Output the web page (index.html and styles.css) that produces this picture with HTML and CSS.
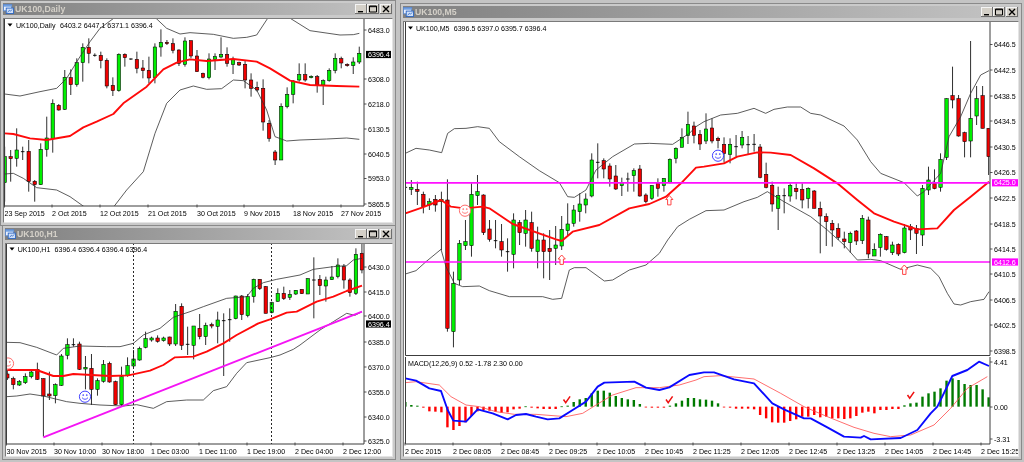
FILE: index.html
```html
<!DOCTYPE html>
<html lang="en">
<head>
<meta charset="utf-8">
<title>UK100 charts</title>
<link rel="stylesheet" href="styles.css">
</head>
<body>
<svg class="defs" width="0" height="0" aria-hidden="true">
  <symbol id="chart-icon" viewBox="0 0 12 11">
    <rect x="0.5" y="0.5" width="9" height="7" fill="#e8f0ff" stroke="#5a86c8"/>
    <rect x="1" y="1" width="8" height="2" fill="#6f9fe0"/>
    <rect x="3.5" y="4.5" width="8" height="6" fill="#cfe0fa" stroke="#2f68c0"/>
    <path d="M5 9 7 7 8 8 10 6" fill="none" stroke="#2f68c0"/>
  </symbol>
  <symbol id="btn-min" viewBox="0 0 12 10"><rect x="3" y="7" width="5" height="1.4" fill="#000"/></symbol>
  <symbol id="btn-max" viewBox="0 0 12 10"><path d="M2.5 2h7v6h-7z M2.5 2.7h7" fill="none" stroke="#000" stroke-width="1"/></symbol>
  <symbol id="btn-close" viewBox="0 0 12 10"><path d="M3 2 9 8M9 2 3 8" fill="none" stroke="#000" stroke-width="1.4"/></symbol>
</svg>

<section class="window win-daily">
  <header class="title">
    <svg class="title-icon"><use href="#chart-icon"/></svg>
    <span class="title-text">UK100,Daily</span>
    <div class="buttons">
      <span class="btn"><svg><use href="#btn-min"/></svg></span>
      <span class="btn"><svg><use href="#btn-max"/></svg></span>
      <span class="btn btn-close"><svg><use href="#btn-close"/></svg></span>
    </div>
  </header>
  <div class="client"><svg class="chart" id="daily"></svg></div>
</section>

<section class="window win-h1">
  <header class="title">
    <svg class="title-icon"><use href="#chart-icon"/></svg>
    <span class="title-text">UK100,H1</span>
    <div class="buttons">
      <span class="btn"><svg><use href="#btn-min"/></svg></span>
      <span class="btn"><svg><use href="#btn-max"/></svg></span>
      <span class="btn btn-close"><svg><use href="#btn-close"/></svg></span>
    </div>
  </header>
  <div class="client"><svg class="chart" id="h1"></svg></div>
</section>

<section class="window win-m5">
  <header class="title">
    <svg class="title-icon"><use href="#chart-icon"/></svg>
    <span class="title-text">UK100,M5</span>
    <div class="buttons">
      <span class="btn"><svg><use href="#btn-min"/></svg></span>
      <span class="btn"><svg><use href="#btn-max"/></svg></span>
      <span class="btn btn-close"><svg><use href="#btn-close"/></svg></span>
    </div>
  </header>
  <div class="client"><svg class="chart" id="m5"></svg></div>
</section>

<script src="chart.js"></script>
</body>
</html>
```
FILE: styles.css
```css
html, body {
  margin: 0;
  height: 100%;
  overflow: hidden;
}
body {
  position: relative;
  background: #c4c4c4;
  font-family: "Liberation Sans", Arial, sans-serif;
}
.defs { position: absolute; }

/* MDI child windows sit on a free canvas */
.window {
  position: absolute;
  box-sizing: border-box;
  display: flex;
  flex-direction: column;
  padding: 2px;
  background: #cacaca;
  border: 1px solid #8a8a8a;
  filter: blur(0.3px);
}
.win-daily { left: 0; top: 0; width: 396px; height: 226px; }
.win-h1 { left: 2px; top: 225px; width: 394px; height: 235px; }
.win-m5 { left: 400px; top: 3px; width: 622px; height: 457px; }

.title {
  flex: none;
  height: 12px;
  margin-bottom: 3px;
  display: flex;
  align-items: center;
  gap: 1px;
  background: linear-gradient(90deg, #808080, #c4c4c4);
}
.title-icon { flex: none; width: 11px; height: 10px; }
.title-text {
  flex: 1;
  color: #d4d0c8;
  font-size: 8.7px;
  font-weight: 700;
  white-space: nowrap;
}
.buttons { display: flex; flex: none; margin-right: 1px; }
.btn {
  width: 12px;
  height: 10px;
  background: #d4d0c8;
  box-shadow: inset -1px -1px 0 #6e6e6e, inset 1px 1px 0 #f4f4f4;
}
.btn-close { margin-left: 1px; }
.btn svg { display: block; width: 12px; height: 10px; }

.client {
  flex: 1;
  min-height: 0;
  background: #fff;
  border: 1px solid #7a7a7a;
  border-right-color: #e4e4e4;
  border-bottom-color: #e4e4e4;
}
.chart { display: block; width: 100%; height: 100%; }

/* chart strokes */
.frame { fill: none; stroke: #3c3c3c; stroke-width: 1; }
.tick { stroke: #404040; stroke-width: 0.9; }
.wick { stroke: #303030; stroke-width: 1; }
.body-up { fill: #00f000; stroke: #000; stroke-width: 0.55; }
.body-down { fill: #f00000; stroke: #000; stroke-width: 0.55; }
.doji { stroke: #000; stroke-width: 0.9; }
.band { fill: none; stroke: #333; stroke-width: 0.8; }
.ma { fill: none; stroke: #ff0a0a; stroke-width: 1.9; stroke-linejoin: round; }
.trend { fill: none; stroke: #f414f4; stroke-width: 1.9; }
.level { stroke: #ff10ff; stroke-width: 1.7; }
.vline { stroke: #111; stroke-width: 0.9; stroke-dasharray: 2 2; }
.macd { fill: none; stroke: #0a0aff; stroke-width: 1.9; stroke-linejoin: round; }
.signal { fill: none; stroke: #ff4a4a; stroke-width: 0.8; }
.hist-up { fill: #007a00; }
.hist-down { fill: #ff0000; }

.legend-arrow { fill: #000; }
.smile-blue { fill: #fff; stroke: #2a2aff; stroke-width: 0.9; }
.smile-red { fill: #fff; stroke: #ff5a5a; stroke-width: 0.9; }
.smile-face { fill: none; stroke-width: 0.8; }
.up-arrow { fill: #fff; stroke: #f44; stroke-width: 1; }
.check { fill: none; stroke: #ee1010; stroke-width: 1.5; }

.label { font-size: 7.1px; fill: #000; font-family: "Liberation Sans", Arial, sans-serif; }
.label-light { fill: #fff; }
.tag-black { fill: #000; }
.tag-magenta { fill: #ff00ff; }
```
FILE: chart.js
```js
// All chart data is in "zoom units": page pixels times three.
const NS = 'http://www.w3.org/2000/svg';

function el(parent, name, attrs, text) {
  const n = document.createElementNS(NS, name);
  for (const k in attrs) n.setAttribute(k, attrs[k]);
  if (text !== undefined) n.textContent = text;
  parent.appendChild(n);
  return n;
}

function setup(id) {
  const svg = document.getElementById(id);
  const r = svg.getBoundingClientRect();
  svg.setAttribute('viewBox', `${r.left} ${r.top} ${r.width} ${r.height}`);
  return svg;
}

function plotGroup(svg, id, x0, y0, x1, y1) {
  const cp = el(svg, 'clipPath', { id });
  el(cp, 'rect', { x: x0, y: y0, width: x1 - x0, height: y1 - y0 });
  return el(svg, 'g', { 'clip-path': `url(#${id})` });
}

function line(g, cls, pts, ox = 0, oy = 0) {
  const d = pts.map(([x, y]) => `${((x + ox) / 3).toFixed(2)},${((y + oy) / 3).toFixed(2)}`).join(' ');
  el(g, 'polyline', { class: cls, points: d });
}

function candles(g, rows, xAt, ox, width = 3.4) {
  rows.forEach(([hi, lo, top, bot, t], i) => {
    const x = (xAt(i) + ox) / 3;
    el(g, 'line', { class: 'wick', x1: x, x2: x, y1: hi / 3, y2: lo / 3 });
    if (t === 'd') {
      el(g, 'line', { class: 'doji', x1: x - 1.8, x2: x + 1.8, y1: top / 3, y2: top / 3 });
    } else {
      el(g, 'rect', {
        class: t === 'g' ? 'body-up' : 'body-down',
        x: x - width / 2, y: top / 3, width, height: Math.max((bot - top) / 3, 1)
      });
    }
  });
}

function text(svg, x, cy, s, cls = 'label') {
  el(svg, 'text', { class: cls, x, y: cy + 2.5 }, s);
}

function yAxis(svg, x, labels) {
  labels.forEach(([s, y]) => {
    el(svg, 'line', { class: 'tick', x1: x, x2: x + 2.5, y1: y, y2: y });
    text(svg, x + 4, y, s);
  });
}

function xAxis(svg, y, labels) {
  labels.forEach(([s, x]) => {
    el(svg, 'line', { class: 'tick', x1: x, x2: x, y1: y - 8.5, y2: y - 5.5 });
    text(svg, x, y, s);
  });
}

function legend(svg, ax, ay, tx, name, vx, values) {
  el(svg, 'path', { class: 'legend-arrow', d: `M${ax} ${ay - 1.5}h5l-2.5 3z` });
  text(svg, tx, ay, name);
  text(svg, vx, ay, values);
}

function tag(svg, x, y, w, s, cls) {
  el(svg, 'rect', { class: cls, x, y: y - 3.6, width: w, height: 7.2 });
  text(svg, x + 2, y, s, 'label label-light');
}

function smiley(g, x, y, cls) {
  el(g, 'circle', { class: cls, cx: x, cy: y, r: 5.6 });
  el(g, 'path', { class: `${cls} smile-face`, d: `M${x - 3} ${y + 1}q3 3.2 6 0` });
  el(g, 'circle', { class: `${cls} smile-face`, cx: x - 1.8, cy: y - 1.6, r: 0.5 });
  el(g, 'circle', { class: `${cls} smile-face`, cx: x + 1.8, cy: y - 1.6, r: 0.5 });
}

function upArrow(g, x, y) {
  el(g, 'path', {
    class: 'up-arrow',
    d: `M${x} ${y - 5}l3.6 4h-1.9v5.4h-3.4v-5.4h-1.9z`
  });
}

function check(g, x, y) {
  el(g, 'path', { class: 'check', d: `M${x - 3} ${y}l2.2 3.2 4.4 -6.4` });
}

/* ---------- Daily ---------- */
function daily() {
  const svg = setup('daily');
  const g = plotGroup(svg, 'clip-daily', 4, 19, 364, 206);
  const rows = [
    [440,605,470,548,'g'],[450,545,470,476,'r'],[385,500,450,475,'g'],[440,480,455,455,'d'],[420,575,454,545,'r'],
    [540,605,544,554,'r'],[430,555,448,554,'g'],[350,470,414,448,'g'],[298,458,310,415,'g'],[312,332,316,330,'r'],
    [210,330,232,328,'g'],[208,285,233,254,'r'],[175,260,188,254,'g'],[130,245,142,188,'g'],[115,190,142,160,'r'],
    [160,170,166,166,'d'],[155,205,166,182,'r'],[175,265,181,258,'r'],[232,288,256,272,'r'],[160,275,163,272,'g'],
    [160,200,163,173,'r'],[175,180,177,177,'d'],[155,220,178,205,'r'],[180,235,204,212,'r'],[170,250,211,234,'r'],
    [130,250,141,233,'g'],[88,170,127,141,'g'],[120,135,127,131,'r'],[115,160,131,151,'r'],[148,198,150,190,'r'],
    [112,200,123,193,'g'],[122,175,122,168,'r'],[150,215,168,215,'r'],[218,235,220,232,'r'],[160,238,177,233,'g'],
    [160,210,170,178,'g'],[112,175,163,171,'g'],[142,200,163,190,'r'],[170,222,178,193,'g'],[185,198,188,195,'r'],
    [180,265,193,240,'r'],[220,290,240,265,'r'],[245,275,262,270,'r'],[238,392,265,366,'r'],[360,425,370,415,'r'],
    [450,495,456,480,'r'],[310,480,319,480,'g'],[262,325,283,320,'g'],[240,310,243,283,'g'],[190,245,224,240,'g'],
    [190,245,224,240,'r'],[226,235,229,233,'g'],[225,278,230,255,'r'],[238,315,242,255,'g'],[205,245,211,242,'g'],
    [160,220,175,211,'g'],[170,205,176,189,'r'],[190,200,193,197,'r'],[172,222,186,197,'g'],[140,192,160,186,'g']
  ];
  candles(g, rows, i => 14 + 18.03 * i, 0);
  line(g, 'band', [[14,282],[60,288],[120,275],[170,265],[200,235],[240,170],[270,125],[300,85],[345,52]]);
  line(g, 'band', [[465,52],[500,85],[540,102],[570,98],[640,103],[700,115],[740,112],[770,105],[805,52]]);
  line(g, 'band', [[866,52],[930,92],[1020,105],[1060,104],[1078,100]]);
  line(g, 'band', [[14,522],[40,520],[70,535],[110,563],[170,570],[210,590],[255,622]]);
  line(g, 'band', [[340,622],[380,570],[430,515],[465,400],[500,310],[540,270],[580,258],[620,268],[665,266],[700,240],[730,242],[770,270],[800,330],[825,410],[860,423],[900,420],[980,417],[1040,414],[1078,418]]);
  line(g, 'ma', [[14,400],[40,402],[90,415],[140,420],[210,408],[250,382],[290,365],[340,342],[370,310],[440,260],[490,208],[530,188],[570,178],[620,183],[700,177],[770,185],[810,205],[870,242],[930,255],[1010,258],[1078,260]]);
  el(svg, 'path', { class: 'frame', d: 'M4.5 19V206H364V19' });
  yAxis(svg, 364, [['6483.0',30],['6308.0',79],['6218.0',104],['6130.5',129],['6040.5',154],['5953.0',178.5],['5865.5',204]]);
  tag(svg, 366, 54.5, 25, '6396.4', 'tag-black');
  xAxis(svg, 213, [['23 Sep 2015',4.5],['2 Oct 2015',52],['12 Oct 2015',100],['21 Oct 2015',148],['30 Oct 2015',197],['9 Nov 2015',244],['18 Nov 2015',293],['27 Nov 2015',341]]);
  legend(svg, 7.5, 25, 16, 'UK100,Daily', 60, '6403.2 6447.1 6371.1 6396.4');
}

/* ---------- H1 ---------- */
function h1() {
  const svg = setup('h1');
  const off = 690;
  const g = plotGroup(svg, 'clip-h1', 6.5, 243, 364, 444);
  const rows = [
    [420,450,432,444,'r'],[440,478,446,464,'r'],[450,468,455,465,'g'],[430,462,440,458,'g'],[420,445,426,440,'g'],
    [398,450,418,448,'r'],[445,620,446,498,'r'],[425,510,492,498,'r'],[460,520,464,497,'g'],[372,468,378,466,'g'],
    [325,388,344,376,'g'],[325,350,344,350,'d'],[335,420,342,418,'r'],[378,478,412,417,'g'],[372,525,415,478,'r'],
    [445,497,452,478,'g'],[390,458,403,454,'g'],[395,458,400,456,'r'],[452,525,455,524,'r'],[410,530,440,524,'g'],
    [382,440,407,436,'g'],[360,412,387,408,'g'],[350,392,355,390,'g'],[305,355,326,352,'g'],[320,335,324,330,'g'],
    [316,338,324,334,'r'],[320,335,324,332,'g'],[320,348,321,342,'r'],[222,348,244,342,'g'],[220,360,229,346,'r'],
    [290,375,343,343,'d'],[288,388,288,346,'g'],[252,328,295,320,'r'],[278,345,286,320,'g'],[278,295,284,288,'r'],
    [245,340,270,289,'g'],[250,438,272,272,'d'],[235,335,269,269,'d'],[197,268,198,266,'g'],[195,270,198,254,'r'],
    [192,262,200,257,'g'],[146,218,148,200,'g'],[148,180,148,176,'r'],[168,250,170,250,'r'],[215,250,218,248,'g'],
    [175,215,190,214,'g'],[170,210,190,206,'r'],[180,210,193,202,'g'],[180,195,181,192,'g'],[178,192,178,191,'r'],
    [145,192,146,192,'g'],[82,265,150,150,'d'],[135,195,148,167,'r'],[140,215,150,168,'g'],[108,150,141,149,'g'],
    [85,145,105,140,'g'],[102,176,110,150,'r'],[145,200,150,188,'r'],[55,195,73,190,'g'],[40,130,70,120,'r']
  ].map(r => [r[0] + off, r[1] + off, r[2] + off, r[3] + off, r[4]]);
  candles(g, rows, i => 22 + 18.03 * i, 0);
  el(g, 'line', { class: 'vline', x1: 133.5, x2: 133.5, y1: 243, y2: 444 });
  el(g, 'line', { class: 'vline', x1: 271.5, x2: 271.5, y1: 243, y2: 444 });
  line(g, 'band', [[20,337],[60,338],[110,352],[170,375],[190,355],[240,348],[320,350],[360,350],[400,340],[430,315],[480,295],[520,262],[540,255],[570,245],[610,230],[680,205],[740,200],[760,175],[790,158],[830,148],[900,135],[940,118],[1000,110],[1040,107],[1060,90],[1086,85]], 0, off);
  line(g, 'band', [[20,500],[50,498],[90,492],[130,498],[200,515],[240,520],[300,525],[370,528],[410,524],[460,535],[500,515],[560,510],[610,510],[640,482],[680,470],[710,430],[740,398],[810,383],[840,375],[880,358],[900,345],[960,300],[1000,275],[1040,250],[1065,256],[1086,245]], 0, off);
  line(g, 'ma', [[22,420],[110,420],[160,438],[190,438],[220,432],[330,438],[385,436],[450,422],[490,405],[525,382],[580,380],[620,365],[670,340],[710,315],[775,280],[810,268],[860,248],[890,245],[950,215],[1000,200],[1040,183],[1086,167]], 0, off);
  line(g, 'trend', [[130,622],[1086,245]], 0, off);
  smiley(g, 85, 396.7, 'smile-blue');
  smiley(g, 8, 363.5, 'smile-red');
  el(svg, 'path', { class: 'frame', d: 'M6.5 243V444H364V243' });
  yAxis(svg, 364, [['6430.0',267],['6415.0',292],['6400.0',316],['6385.0',342],['6370.0',367],['6355.0',392],['6340.0',417],['6325.0',441]]);
  tag(svg, 366, 324, 25, '6396.4', 'tag-black');
  xAxis(svg, 451, [['30 Nov 2015',6.5],['30 Nov 10:00',54],['30 Nov 18:00',102],['1 Dec 03:00',151],['1 Dec 11:00',199],['1 Dec 19:00',247],['2 Dec 04:00',295],['2 Dec 12:00',343]]);
  legend(svg, 9.5, 249, 17.7, 'UK100,H1', 54.5, '6396.4 6396.4 6396.4 6396.4');
}

/* ---------- M5 ---------- */
function m5() {
  const svg = setup('m5');
  const ox = 1188;              // 396 * 3: coordinates below start at the chart's left side
  const joinX = 924;            // second half of the data was read 924 units to the right
  const macdY = 690;
  const g = plotGroup(svg, 'clip-m5', 405, 22, 990, 355);
  const rows = [
    [545,605,562,562,'d'],[540,585,562,568,'g'],[545,615,568,574,'r'],[575,640,583,620,'r'],[595,630,605,615,'g'],
    [585,635,598,615,'r'],[575,750,598,605,'g'],[538,995,600,985,'r'],[815,1042,850,995,'g'],[720,855,730,840,'g'],
    [660,750,725,737,'g'],[550,770,583,737,'g'],[525,615,575,587,'g'],[583,705,585,698,'r'],[660,725,687,718,'r'],
    [660,745,722,722,'d'],[672,770,725,750,'r'],[715,815,755,755,'d'],[640,805,660,763,'g'],[660,735,668,698,'r'],
    [630,740,660,700,'g'],[635,755,668,745,'r'],[680,805,720,755,'g'],[700,835,720,755,'r'],[690,840,745,755,'r'],
    [678,795,735,745,'g'],[648,750,688,738,'g'],[610,705,672,692,'g'],[615,680,630,670,'g'],[580,665,612,635,'g'],
    [580,640,597,615,'g'],[460,592,480,588,'g'],[430,535,487,487,'d'],[475,535,482,507,'r'],[490,560,498,537,'r'],
    [495,570,528,567,'r'],[533,588,548,557,'g'],[518,575,537,537,'d'],[505,575,512,527,'g'],[495,590,507,588,'r'],
    [580,610,585,605,'r'],[555,600,557,595,'g'],[535,590,550,565,'r'],[535,575,535,557,'g'],[475,550,478,548,'g'],
    [442,490,445,475,'g'],[385,440,412,442,'g'],[335,432,373,407,'g'],[365,430,378,406,'r'],[390,450,403,432,'r'],
    [340,432,387,423,'g'],[355,430,384,423,'r'],[410,445,415,422,'r'],[412,488,433,460,'r'],[415,490,433,463,'g'],
    [405,470,440,440,'d'],[393,445,412,435,'g'],[408,465,434,434,'d'],[402,455,433,433,'d'],[432,535,441,532,'r'],
    [488,565,523,562,'r'],[545,635,556,612,'r'],[560,690,587,625,'g'],[565,640,587,587,'d'],[550,605,556,588,'g'],
    [550,598,565,575,'r'],[550,625,568,600,'r'],[562,625,565,595,'g'],[570,625,573,625,'r'],[605,760,625,648,'r'],
    [640,738,650,665,'r'],[660,740,670,690,'r'],[670,720,685,712,'r'],[695,745,717,725,'r'],[695,758,700,728,'g'],
    [690,735,693,723,'r'],[645,732,655,722,'g'],[650,775,660,762,'r'],[730,768,748,768,'g'],[700,770,703,742,'g'],
    [708,752,710,748,'r'],[725,765,735,758,'g'],[730,768,733,762,'r'],[672,760,684,758,'g'],[672,720,680,690,'r'],
    [675,762,686,700,'r'],[555,738,565,705,'g'],[500,585,540,570,'g'],[508,568,550,566,'r'],[460,575,478,562,'g'],
    [295,480,296,472,'g'],[200,325,287,300,'r'],[285,410,296,408,'r'],[395,472,398,425,'r'],[123,472,355,423,'g'],
    [258,375,296,348,'g'],[258,385,287,385,'r'],[385,525,385,470,'r']
  ];
  candles(g, rows, i => 28 + 18.04 * i, ox);
  const shift = (pts, dx, dy) => pts.map(([x, y]) => [x + dx, y + dy]);
  line(g, 'band', [].concat(
    [[28,460],[60,445],[100,450],[137,458],[155,400],[175,386],[210,385],[245,380],[280,385],[310,425],[370,470],[430,512],[490,548],[515,590],[535,592],[570,570],[600,510],[650,470],[715,432],[760,430],[830,433],[880,400],[900,380]],
    shift([[0,365],[50,345],[100,340],[150,325],[185,340],[210,328],[250,321],[290,321],[320,340],[350,345],[420,378],[460,420],[500,485],[530,520],[600,548],[640,588],[660,575],[710,520],[735,410],[770,350],[800,280],[830,225],[855,212]], joinX, 0)
  ), ox);
  line(g, 'band', [].concat(
    shift([[28,132],[60,122],[90,95],[135,58],[150,110],[175,160],[200,170],[250,168],[280,182],[340,200],[440,200],[470,208],[497,205],[520,120],[535,113],[570,113],[625,153],[650,150],[700,120],[750,105],[790,70]], 0, macdY),
    [[815,720],[845,680],[880,658],[930,632]],
    shift([[60,630],[120,605],[160,592],[190,575],[240,605],[320,650]], joinX, 0),
    shift([[370,0],[420,45],[460,90],[500,88],[530,92],[590,118],[640,105],[680,115],[705,140],[730,190],[750,222],[770,225],[800,215],[840,208],[855,185]], joinX, macdY)
  ), ox);
  line(g, 'ma', [].concat(
    [[28,640],[80,622],[135,600],[165,620],[205,625],[260,620],[280,625],[350,672],[480,718],[497,723],[530,695],[610,675],[700,625],[760,612],[810,590],[860,545],[900,503]],
    shift([[0,500],[60,490],[100,470],[160,457],[200,458],[260,465],[330,505],[400,550],[460,600],[510,640],[570,665],[640,688],[700,685],[750,630],[800,590],[855,545]], joinX, 0)
  ), ox);
  el(g, 'line', { class: 'level', x1: 405, x2: 990, y1: 182.8, y2: 182.8 });
  el(g, 'line', { class: 'level', x1: 405, x2: 990, y1: 262, y2: 262 });
  smiley(g, 465, 210.7, 'smile-red');
  smiley(g, 718, 155.7, 'smile-blue');
  upArrow(g, 669.3, 200.5);
  upArrow(g, 561.7, 260);
  upArrow(g, 904.3, 270);
  el(svg, 'path', { class: 'frame', d: 'M405.5 22V355.5H990V22' });

  // MACD pane
  const h = plotGroup(svg, 'clip-macd', 405, 357, 990, 444);
  const hist = [14,5,3,-3,-14,-15,-17,-62,-70,-58,-47,-28,-14,-10,-12,-15,-18,-17,-8,-6,1,-3,-5,-7,-7,-7,1,3,14,22,26,40,48,48,42,32,26,22,20,8,-2,-3,-3,-3,3,10,18,26,26,22,21,18,10,-1,-3,-6,-6,-6,-8,-25,-35,-47,-48,-48,-43,-38,-30,-30,-25,-32,-30,-35,-35,-37,-35,-28,-18,-15,-20,-10,-10,-7,-7,4,10,12,30,40,45,55,78,85,80,68,65,65,52,28];
  const zero = (530 + macdY) / 3;
  hist.forEach((v, i) => {
    const x = (28 + 18.04 * i + ox) / 3;
    const bh = Math.abs(v) / 3;
    el(h, 'rect', { class: v > 0 ? 'hist-up' : 'hist-down', x: x - 1.2, y: v > 0 ? zero - bh : zero, width: 2.4, height: Math.max(bh, 0.8) });
  });
  line(h, 'signal', [].concat(
    [[28,458],[60,455],[130,465],[165,500],[210,525],[250,530],[300,545],[355,553],[420,553],[510,560],[560,550],[600,525],[650,495],[720,473],[790,473],[850,465],[900,450]],
    shift([[0,440],[50,437],[150,447],[230,490],[300,530],[370,560],[450,592],[510,610],[560,620],[620,615],[690,585],[740,535],[790,475],[850,440]], joinX, 0)
  ), ox, macdY);
  line(h, 'macd', [].concat(
    [[28,445],[60,452],[100,475],[135,483],[155,540],[172,572],[210,575],[245,538],[290,550],[335,568],[360,555],[390,552],[420,560],[455,568],[490,565],[530,540],[570,515],[605,470],[625,458],[715,455],[750,473],[790,480],[820,472],[880,435]],
    shift([[0,427],[30,427],[90,448],[150,460],[205,520],[240,538],[300,565],[320,565],[370,592],[420,620],[470,623],[480,618],[500,628],[590,624],[640,600],[680,550],[700,530],[745,438],[790,420],[825,395],[855,408]], joinX, 0)
  ), ox, macdY);
  check(h, 566.5, 399.5);
  check(h, 669, 399.5);
  check(h, 910.5, 395);
  el(svg, 'path', { class: 'frame', d: 'M405.5 357V444H990V357' });

  yAxis(svg, 990, [['6446.5',44.5],['6442.5',70],['6438.5',96],['6434.5',121],['6430.5',147],['6426.5',172.5],['6422.5',198],['6418.5',224],['6414.5',249],['6410.5',274],['6406.5',300],['6402.5',325],['6398.5',351],['4.41',362],['0.00',407],['-3.31',439]]);
  tag(svg, 992, 182.8, 26, '6425.0', 'tag-magenta');
  tag(svg, 992, 262, 26, '6412.6', 'tag-magenta');
  xAxis(svg, 451, [['2 Dec 2015',405],['2 Dec 08:05',453],['2 Dec 08:45',501],['2 Dec 09:25',549],['2 Dec 10:05',597],['2 Dec 10:45',645],['2 Dec 11:25',693],['2 Dec 12:05',741],['2 Dec 12:45',789],['2 Dec 13:25',837],['2 Dec 14:05',885],['2 Dec 14:45',933],['2 Dec 15:25',981]]);
  legend(svg, 408, 28, 416, 'UK100,M5', 453.7, '6396.5 6397.0 6395.7 6396.4');
  text(svg, 408, 363.3, 'MACD(12,26,9) 0.52 -1.78 2.30 0.00');
}

daily();
h1();
m5();
```
